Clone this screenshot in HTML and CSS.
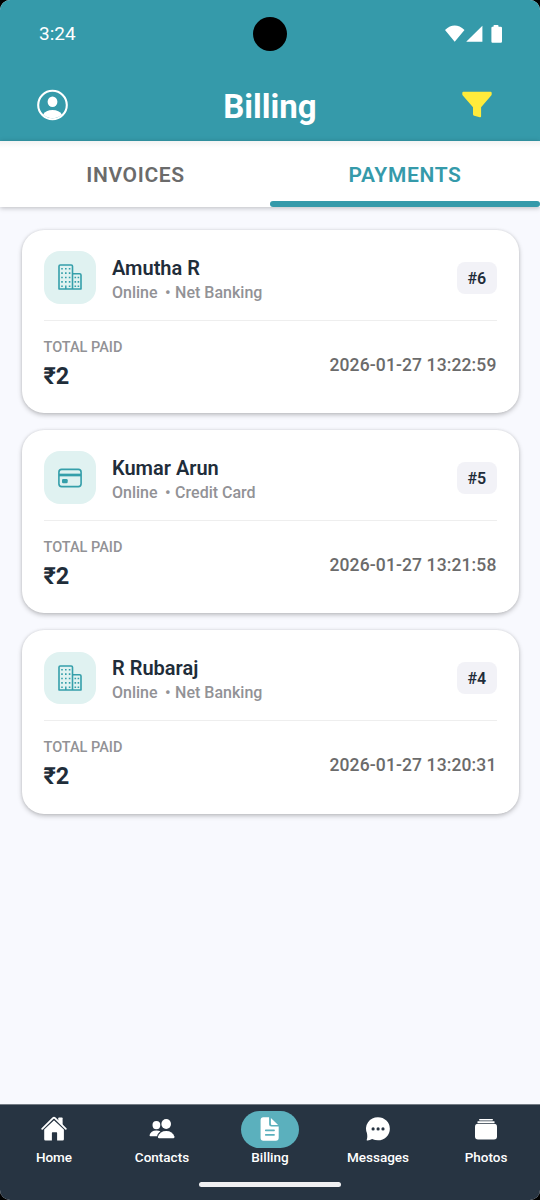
FILE: index.html
```html
<!DOCTYPE html>
<html lang="en">
<head>
<meta charset="utf-8">
<title>Billing</title>
<link rel="stylesheet" href="styles.css">
</head>
<body>
<svg class="defs" aria-hidden="true">
  <symbol id="bank" viewBox="0 0 24 26">
    <path d="M1 25V2.3Q1 1 2.3 1H13.2Q14.5 1 14.5 2.3V25ZM14.5 9.7H21.6Q23 9.7 23 11V25H14.5" fill="none" stroke="currentColor" stroke-width="1.6" stroke-linejoin="round"/>
    <path d="M4 3.9V23.5M7.8 3.9V19M11.6 3.9V23.5M17.3 12.7V23.5M20.4 12.7V23.5" fill="none" stroke="currentColor" stroke-width="1.6" stroke-dasharray="1.6 2.8"/>
    <path d="M7.8 21.5V25" stroke="currentColor" stroke-width="1.5"/>
  </symbol>
  <symbol id="card" viewBox="0 0 24 20">
    <rect x=".9" y="1.4" width="22.2" height="17.2" rx="2.8" fill="none" stroke="currentColor" stroke-width="1.6"/>
    <path d="M1 7H23" stroke="currentColor" stroke-width="2.7"/>
    <rect x="4" y="11" width="5.7" height="4.2" rx="1.3" fill="currentColor"/>
  </symbol>
</svg>
<div class="screen">
  <header class="header">
    <div class="status">
      <span class="time">3:24</span>
      <svg class="signals" width="58" height="18" viewBox="0 0 58 18" fill="#fff"><path d="M0 4.9Q9.7-3.8 19.5 4.9L9.7 16.8ZM21.2 16.8 37.4 .7V16.8Z"/><path d="M48.5 1.8V.9Q48.5.1 49.3.1H52.7Q53.5.1 53.5.9V1.8H55.8Q57 1.8 57 3V16.5Q57 17.7 55.8 17.7H47.4Q46.4 17.7 46.4 16.5V3Q46.4 1.8 47.4 1.8Z"/></svg>
    </div>
    <div class="camera"></div>
    <div class="titlebar">
      <svg class="profile" width="32" height="32" viewBox="0 0 32 32"><circle cx="16.5" cy="16" r="14.3" fill="none" stroke="#fff" stroke-width="2.1"/><ellipse cx="16.5" cy="12.8" rx="4.9" ry="5.3" fill="#fff"/><path d="M7.1 25.4Q9.7 20.9 16.5 20.9T25.9 25.4A13.7 13.7 0 0 1 7.1 25.4Z" fill="#fff"/></svg>
      <h1>Billing</h1>
      <svg class="filter" width="30" height="27" viewBox="0 0 30 27"><path d="M1.4.8H28.6Q29.7.8 29.7 2V3.3Q29.7 4 29.2 4.6L19.1 16.2V25.2Q19.1 26.5 17.8 26.2L12.2 24.7Q11 24.4 11 23.2V16.2L.8 4.6Q.3 4 .3 3.3V2Q.3.8 1.4.8Z" fill="#ffeb3b"/></svg>
    </div>
  </header>
  <nav class="tabs"><span class="tab">INVOICES</span><span class="tab active">PAYMENTS</span></nav>
  <main class="list">
    <article class="card">
      <div class="top"><div class="tile"><svg width="24" height="26"><use href="#bank"/></svg></div><div class="person"><h2>Amutha R</h2><p>Online <span class="dot">•</span> Net Banking</p></div><span class="badge">#6</span></div>
      <div class="bottom"><div><div class="label">TOTAL PAID</div><div class="amount">₹2</div></div><time>2026-01-27 13:22:59</time></div>
    </article>
    <article class="card">
      <div class="top"><div class="tile"><svg width="24" height="20"><use href="#card"/></svg></div><div class="person"><h2>Kumar Arun</h2><p>Online <span class="dot">•</span> Credit Card</p></div><span class="badge">#5</span></div>
      <div class="bottom"><div><div class="label">TOTAL PAID</div><div class="amount">₹2</div></div><time>2026-01-27 13:21:58</time></div>
    </article>
    <article class="card">
      <div class="top"><div class="tile"><svg width="24" height="26"><use href="#bank"/></svg></div><div class="person"><h2>R Rubaraj</h2><p>Online <span class="dot">•</span> Net Banking</p></div><span class="badge">#4</span></div>
      <div class="bottom"><div><div class="label">TOTAL PAID</div><div class="amount">₹2</div></div><time>2026-01-27 13:20:31</time></div>
    </article>
  </main>
  <footer class="navbar">
    <div class="items">
      <div class="item"><div class="pill"><svg width="26" height="26" viewBox="0 0 26 26" fill="#fff"><path d="M3.2 13.4 13 4.2 22.9 13.4V23.3Q22.9 24.6 21.6 24.6H16.1V16.8Q16.1 16.2 15.5 16.2H11.5Q10.9 16.2 10.9 16.8V24.6H4.5Q3.2 24.6 3.2 23.3Z"/><path d="M1.2 13 12 2.6Q13 1.7 14 2.6L24.8 13" fill="none" stroke="#273442" stroke-width="3"/><path d="M1.2 12.8 12 2.2Q13 1.3 14 2.2L24.8 12.8" fill="none" stroke="#fff" stroke-width="1.8" stroke-linecap="round"/><path d="M17.3 2.3Q17.3 1.6 18 1.6H20.9Q21.6 1.6 21.6 2.3V9.2L17.3 5Z"/></svg></div><span>Home</span></div>
      <div class="item"><div class="pill"><svg width="26" height="22" viewBox="0 0 26 22" fill="#fff"><ellipse cx="7.4" cy="7.1" rx="3.9" ry="4.2"/><path d="M1.4 18.3Q.4 18.3.6 17.1Q1.6 12.4 7.5 12.4Q9.8 12.4 11.4 13.3Q8.7 15.4 8.1 18.3Z"/><ellipse cx="17.2" cy="6" rx="4.8" ry="5"/><path d="M9.9 20.3Q8.6 20.3 9 18.6Q10.9 12.9 17.2 12.9Q23.6 12.9 25.4 18.6Q25.8 20.3 24.5 20.3Z"/></svg></div><span>Contacts</span></div>
      <div class="item selected"><div class="pill"><svg width="20" height="26" viewBox="0 0 20 26"><path d="M3.3 1.3H9.1V8Q9.1 10.5 11.6 10.5H18.7V21.8Q18.7 24.7 15.8 24.7H3.3Q.6 24.7.6 21.8V4.2Q.6 1.3 3.3 1.3ZM10.9 2 18.1 8.9H11.9Q10.9 8.9 10.9 7.9Z" fill="#fff"/><path d="M5.7 14.4H14.1M5.7 18.9H14.1" stroke="#5bb0bd" stroke-width="1.6" stroke-linecap="round"/></svg></div><span>Billing</span></div>
      <div class="item"><div class="pill"><svg width="26" height="26" viewBox="0 0 26 26"><path d="M13 1.2A11.8 11.5 0 0 1 13 24.3Q10 24.3 7.1 23.1Q4.9 24.5 2.6 24.6Q1.3 24.6 1.8 23.5Q2.7 21.2 1.9 17.1A11.8 11.5 0 0 1 13 1.2Z" fill="#fff"/><g fill="#273442"><circle cx="8.1" cy="12.9" r="1.6"/><circle cx="13.1" cy="12.9" r="1.6"/><circle cx="18" cy="12.9" r="1.6"/></g></svg></div><span>Messages</span></div>
      <div class="item"><div class="pill"><svg width="24" height="22" viewBox="0 0 24 22" fill="#fff"><rect x="5" y=".9" width="14" height="1.7" rx=".8"/><rect x="3.3" y="3.3" width="17.4" height="1.7" rx=".8"/><rect x="1" y="5.8" width="22" height="15.7" rx="3"/></svg></div><span>Photos</span></div>
    </div>
    <div class="home-indicator"></div>
  </footer>
</div>
</body>
</html>
```
FILE: styles.css
```css
* { box-sizing: border-box; }
body { margin: 0; background: #000; font-family: Roboto, sans-serif; }
h1, h2, p { margin: 0; }
svg { display: block; flex: none; }
.defs { position: absolute; width: 0; height: 0; }
.screen { width: 540px; height: 1200px; display: flex; flex-direction: column; background: #f8f9fe; border-radius: 10px; overflow: hidden; }
.header { position: relative; height: 141.4px; background: #359aaa; color: #fff; flex: none; }
.status { height: 68px; display: flex; align-items: center; justify-content: space-between; padding: 0 37px 0 39px; }
.time { font-size: 19px; line-height: 24px; }
.camera { position: absolute; left: 253px; top: 17px; width: 34px; height: 34px; border-radius: 50%; background: #000; }
.titlebar { height: 74px; display: grid; grid-template-columns: 100px 1fr 100px; align-items: center; }
.profile { margin-left: 36px; }
.filter { margin-left: 22px; margin-top: -1px; }
h1 { font-size: 33px; line-height: 40px; font-weight: 700; text-align: center; padding-top: 4px; }
.tabs { position: relative; height: 66px; flex: none; display: flex; background: linear-gradient(#f3f3f3, #fff 7px); box-shadow: 0 1px 5px rgba(0,0,0,.25); }
.tab { position: relative; flex: 1; text-align: center; font-size: 21px; line-height: 68px; height: 66px; font-weight: 600; letter-spacing: .65px; text-indent: 1px; color: #6b6b6b; }
.active { color: #359aaa; text-indent: 0; }
.active::after { content: ""; position: absolute; left: 0; right: 0; bottom: .5px; height: 6px; border-radius: 3px; background: #359aaa; }
.list { flex: 1; display: flex; flex-direction: column; gap: 17px; padding: 22.7px 21.5px; }
.card { height: 183.2px; flex: none; border-radius: 22px; background: #fff; padding: 21.5px 22px; box-shadow: 0 2px 5px rgba(0,0,0,.23), 0 0 3px rgba(0,0,0,.1); }
.top { display: flex; align-items: center; height: 69.3px; padding-bottom: 16.5px; border-bottom: 1px solid #eee; }
.tile { width: 52.5px; height: 52.5px; display: flex; align-items: center; justify-content: center; border-radius: 16px; background: #e0f2f1; color: #359faa; }
.person { flex: 1; padding: 5px 0 0 16px; }
h2 { font-size: 20px; line-height: 26px; font-weight: 600; color: #1f2d3a; }
p { font-size: 16px; line-height: 24px; font-weight: 500; color: #929296; white-space: nowrap; }
.dot { margin: 0 .5px 0 3.5px; }
.badge { width: 39.5px; height: 32px; margin-top: 1px; border-radius: 8px; background: #f2f2f7; text-align: center; font-size: 16px; line-height: 33px; font-weight: 600; color: #1f2d3a; }
.bottom { display: flex; align-items: center; justify-content: space-between; height: 88px; }
.label { font-size: 14.5px; line-height: 20px; font-weight: 500; color: #929296; }
.amount { font-size: 23.5px; line-height: 30px; font-weight: 700; color: #1f2d3a; margin: 3px 0 1px; }
time { font-size: 17.5px; font-weight: 500; letter-spacing: .12px; color: #6b6b6b; }
.navbar { height: 96px; flex: none; background: #273442; border-top: 1px solid #737b84; color: #fff; }
.items { display: flex; padding-top: 6px; height: 79px; }
.item { flex: 1; display: flex; flex-direction: column; align-items: center; font-size: 13.5px; line-height: 18px; font-weight: 500; }
.pill { width: 58px; height: 37px; border-radius: 19px; display: flex; align-items: center; justify-content: center; }
.pill svg { margin: -1px 1px 0 0; }
.selected .pill { background: #5bb0bd; }
.home-indicator { width: 142px; height: 5px; border-radius: 3px; background: #f0f0f2; margin: -2px auto 0; }
```
